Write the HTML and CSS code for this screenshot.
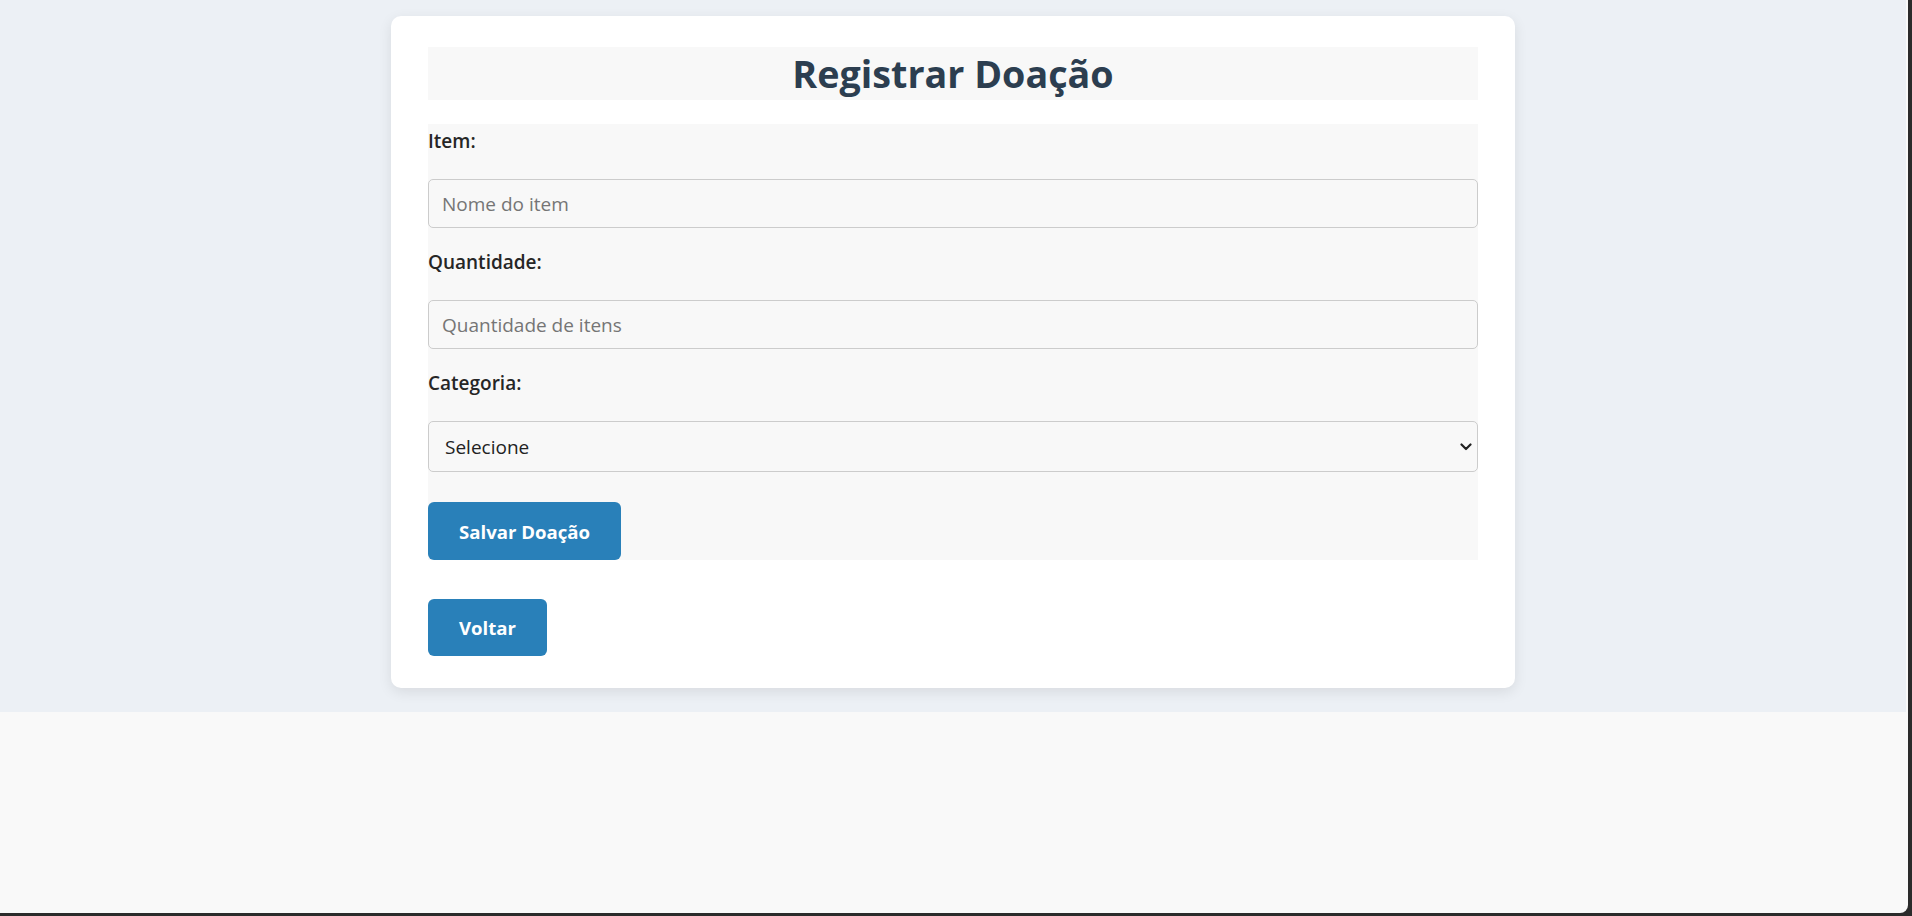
FILE: index.html
```html
<!DOCTYPE html>
<html lang="pt-BR">
<head>
<meta charset="utf-8">
<title>Registrar Doação</title>
<link rel="stylesheet" href="styles.css">
</head>
<body>
<div class="page">
  <main class="card">
    <header class="card-header">
      <h1>Registrar Doação</h1>
    </header>
    <form class="form">
      <label class="label" for="item">Item:</label>
      <input class="field" id="item" type="text" placeholder="Nome do item">
      <label class="label" for="qtd">Quantidade:</label>
      <input class="field" id="qtd" type="text" placeholder="Quantidade de itens">
      <label class="label" for="cat">Categoria:</label>
      <div class="select-wrap">
        <select class="field select" id="cat">
          <option>Selecione</option>
        </select>
        <svg class="chevron" width="12" height="8" viewBox="0 0 12 8"><path d="M1.5 1.5 L6 6 L10.5 1.5" fill="none" stroke="#222" stroke-width="2.2" stroke-linecap="round" stroke-linejoin="round"/></svg>
      </div>
      <button class="btn btn-save" type="button">Salvar Doação</button>
    </form>
    <a class="btn btn-back" href="#">Voltar</a>
  </main>
</div>
<div class="frame"></div>
</body>
</html>
```
FILE: styles.css
```css
* { box-sizing: border-box; }
html, body { margin: 0; padding: 0; }
body {
  background: #f9f9f9;
  font-family: "Open Sans", "Noto Sans", sans-serif;
  color: #222;
  height: 916px;
  overflow: hidden;
}
.page {
  background: #ecf0f5;
  margin-right: 6px;
  padding: 16px 0 24px;
}
.card {
  width: 1124px;
  margin: 0 auto;
  background: #ffffff;
  border-radius: 10px;
  box-shadow: 0 4px 14px rgba(0, 0, 0, 0.09);
  padding: 31px 37px 32px;
}
.card-header {
  background: #f8f8f8;
  height: 53px;
  margin-bottom: 24px;
}
.card-header h1 {
  margin: 0;
  font-size: 37.7px;
  line-height: 53px;
  font-weight: 700;
  color: #2c3e50;
  text-align: center;
}
.form {
  background: #f8f8f8;
  display: flex;
  flex-direction: column;
  align-items: stretch;
}
.label {
  display: block;
  height: 55px;
  padding-top: 4px;
  font-size: 19px;
  line-height: 26px;
  font-weight: 600;
  color: #262626;
}
.field {
  height: 49px;
  border: 1px solid #cccccc;
  border-radius: 5px;
  background: #f8f8f8;
  padding: 0 13px;
  font-family: inherit;
  font-size: 19px;
  color: #222;
  margin: 0 0 17px;
  width: 100%;
  outline: none;
}
.field::placeholder { color: #757575; }
.select-wrap {
  position: relative;
  margin-bottom: 30px;
}
.select {
  -webkit-appearance: none;
  appearance: none;
  height: 51px;
  margin: 0;
  padding: 0 16px;
  color: #222;
}
.chevron {
  position: absolute;
  right: 6px;
  top: 22px;
}
.btn {
  display: inline-flex;
  align-items: center;
  justify-content: center;
  background: #2980b9;
  color: #ffffff;
  border: none;
  border-radius: 6px;
  font-family: inherit;
  font-size: 18.6px;
  font-weight: 700;
  text-decoration: none;
  padding: 0 31px;
}
.btn-save {
  align-self: flex-start;
  height: 58px;
}
.btn-back {
  margin-top: 39px;
  height: 57px;
}
.frame {
  position: fixed;
  top: 0;
  left: 0;
  right: 4px;
  bottom: 3px;
  border-radius: 0 0 8px 0;
  box-shadow: 0 0 0 30px #2b2b2b;
  pointer-events: none;
}
```
